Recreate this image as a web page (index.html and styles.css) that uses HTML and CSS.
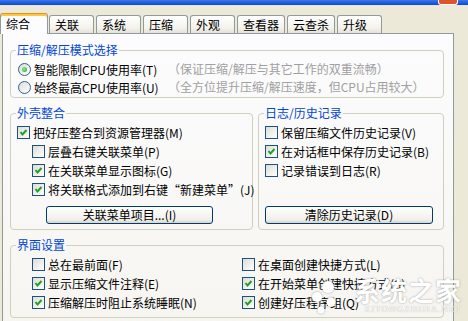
FILE: index.html
```html
<!DOCTYPE html>
<html lang="zh-CN">
<head>
    <meta charset="UTF-8">
    <meta name="viewport" content="width=device-width, initial-scale=1.0">
    <title>好压 设置</title>
    <link rel="stylesheet" href="styles.css">
</head>
<body>
    <div class="window">
        <div class="titlebar"><span class="close"></span></div>
        <div class="dialog">
            <ul class="tabs">
                <li class="active">综合</li>
                <li>关联</li>
                <li>系统</li>
                <li>压缩</li>
                <li>外观</li>
                <li>查看器</li>
                <li>云查杀</li>
                <li>升级</li>
            </ul>
            <div class="panel">
                <fieldset class="group">
                    <legend>压缩/解压模式选择</legend>
                    <div class="body mode">
                        <label class="opt"><span class="radio on"></span>智能限制CPU使用率(T)</label>
                        <span class="hint">（保证压缩/解压与其它工作的双重流畅）</span>
                        <label class="opt"><span class="radio"></span>始终最高CPU使用率(U)</label>
                        <span class="hint">（全方位提升压缩/解压速度，但CPU占用较大）</span>
                    </div>
                </fieldset>

                <div class="pair">
                    <fieldset class="group shell">
                        <legend>外壳整合</legend>
                        <div class="body">
                            <label class="opt"><span class="box on"><svg width="11" height="11" viewBox="0 0 11 11"><polyline points="2.5,5 4.5,7.5 8.5,3" /></svg></span>把好压整合到资源管理器(M)</label>
                            <label class="opt sub"><span class="box"></span>层叠右键关联菜单(P)</label>
                            <label class="opt sub"><span class="box on"><svg width="11" height="11" viewBox="0 0 11 11"><polyline points="2.5,5 4.5,7.5 8.5,3" /></svg></span>在关联菜单显示图标(G)</label>
                            <label class="opt sub"><span class="box on"><svg width="11" height="11" viewBox="0 0 11 11"><polyline points="2.5,5 4.5,7.5 8.5,3" /></svg></span>将关联格式添加到右键“新建菜单”(J)</label>
                            <button class="btn shell-btn">关联菜单项目...(I)</button>
                        </div>
                    </fieldset>
                    <fieldset class="group log">
                        <legend>日志/历史记录</legend>
                        <div class="body">
                            <label class="opt"><span class="box"></span>保留压缩文件历史记录(V)</label>
                            <label class="opt"><span class="box on"><svg width="11" height="11" viewBox="0 0 11 11"><polyline points="2.5,5 4.5,7.5 8.5,3" /></svg></span>在对话框中保存历史记录(B)</label>
                            <label class="opt"><span class="box"></span>记录错误到日志(R)</label>
                            <button class="btn log-btn">清除历史记录(D)</button>
                        </div>
                    </fieldset>
                </div>

                <fieldset class="group">
                    <legend>界面设置</legend>
                    <div class="body ui">
                        <label class="opt"><span class="box"></span>总在最前面(F)</label>
                        <label class="opt"><span class="box"></span>在桌面创建快捷方式(L)</label>
                        <label class="opt"><span class="box on"><svg width="11" height="11" viewBox="0 0 11 11"><polyline points="2.5,5 4.5,7.5 8.5,3" /></svg></span>显示压缩文件注释(E)</label>
                        <label class="opt"><span class="box on"><svg width="11" height="11" viewBox="0 0 11 11"><polyline points="2.5,5 4.5,7.5 8.5,3" /></svg></span>在开始菜单创建快捷方式(S)</label>
                        <label class="opt"><span class="box on"><svg width="11" height="11" viewBox="0 0 11 11"><polyline points="2.5,5 4.5,7.5 8.5,3" /></svg></span>压缩解压时阻止系统睡眠(N)</label>
                        <label class="opt"><span class="box on"><svg width="11" height="11" viewBox="0 0 11 11"><polyline points="2.5,5 4.5,7.5 8.5,3" /></svg></span>创建好压程序组(Q)</label>
                    </div>
                </fieldset>
            </div>
        </div>

        <!-- site watermark over the bottom right corner -->
        <div class="watermark">
            <svg class="mark-logo" width="46" height="40" viewBox="0 0 46 40">
                <circle cx="28" cy="12" r="6" />
                <circle cx="17" cy="22" r="5" />
                <circle cx="31" cy="27" r="4.5" />
                <circle cx="21" cy="35" r="3.5" />
            </svg>
            <div class="mark-text">
                <span class="mark-name">系统之家</span>
                <span class="mark-url">XITONGZHIJIA.NET</span>
            </div>
        </div>
    </div>
</body>
</html>
```

FILE: styles.css
```css
* {
    box-sizing: border-box;
}

body {
    margin: 0;
    background-color: #ece9d8;
    font-family: "Noto Sans CJK SC", "Liberation Sans", sans-serif;
    font-size: 12px;
    color: #000;
}

.window {
    position: relative;
    width: 468px;
    height: 321px;
    overflow: hidden;
}

.titlebar {
    display: flex;
    justify-content: flex-end;
    height: 5px;
    padding-right: 10px;
    background: linear-gradient(#3a78ec, #0b47cf);
}

.titlebar .close {
    width: 20px;
    height: 5px;
    border: 1px solid #fff;
    border-top: none;
    border-radius: 0 0 3px 3px;
    background-color: #e0532a;
}

.dialog {
    padding: 8px 14px 0 2px;
}

.tabs {
    display: flex;
    align-items: flex-end;
    gap: 2px;
    height: 20px;
    margin: 0;
    padding: 0;
    list-style: none;
}

.tabs > li {
    min-width: 45px;
    height: 18px;
    padding: 0 5px;
    border: 1px solid #919b9c;
    border-bottom: none;
    border-radius: 3px 3px 0 0;
    background: linear-gradient(#fff, #f3f2ec 70%, #e4e2d8);
    line-height: 17px;
    white-space: nowrap;
}

.tabs > li.active {
    position: relative;
    z-index: 1;
    min-width: 48px;
    height: 21px;
    margin: 0 -1px -1px -2px;
    border-top: 1px solid #e68b2c;
    background: #fcfcfe;
    box-shadow: inset 0 2px 0 #ffc73c;
    line-height: 19px;
}

.panel {
    height: 300px;
    padding: 9px 9px 0 7px;
    border: 1px solid #919b9c;
    background: linear-gradient(#fcfcfe, #f6f5f0);
}

.group {
    min-width: 0;
    margin: 0;
    padding: 0;
    border: 1px solid #d0d0bf;
    border-radius: 4px;
}

.group legend {
    margin-left: 5px;
    padding: 0 1px;
    color: #0046d5;
    line-height: 14px;
}

.group + .pair,
.pair + .group {
    margin-top: 8px;
}

.pair {
    display: flex;
    gap: 5px;
}

.shell {
    width: 243px;
}

.log {
    flex: 1;
}

.body {
    padding: 3px 0 5px 6px;
}

.mode {
    display: grid;
    grid-template-columns: 150px 1fr;
    padding: 3px 0 1px 7px;
}

.mode .opt {
    height: 18px;
}

.hint {
    color: #a0a0a0;
    line-height: 18px;
    white-space: nowrap;
}

.ui {
    display: grid;
    grid-template-columns: 210px 1fr;
    padding-left: 21px;
}

.opt {
    display: flex;
    align-items: center;
    gap: 3px;
    height: 19px;
    white-space: nowrap;
}

.opt.sub {
    margin-left: 15px;
}

.box,
.radio {
    flex: none;
    display: flex;
    align-items: center;
    justify-content: center;
    width: 13px;
    height: 13px;
    border: 1px solid #1c5180;
    background: linear-gradient(135deg, #dcdcd7, #fff);
}

.box svg polyline {
    fill: none;
    stroke: #21a121;
    stroke-width: 2;
}

.radio {
    border-color: #2f5f8f;
    border-radius: 50%;
}

.radio.on::after {
    content: '';
    width: 5px;
    height: 5px;
    border-radius: 50%;
    background: radial-gradient(circle at 40% 40%, #8ef08e, #21a121);
}

.btn {
    display: block;
    height: 18px;
    padding: 0;
    border: 1px solid #003c74;
    border-radius: 3px;
    background: linear-gradient(#fff, #f0efea 80%, #d8d3c8);
    font-family: inherit;
    font-size: 12px;
    line-height: 16px;
    color: #000;
}

.shell-btn {
    width: 167px;
    margin: 7px 0 0 29px;
}

.log-btn {
    width: 168px;
    margin-top: 26px;
}

.watermark {
    position: absolute;
    right: 6px;
    bottom: 6px;
    display: flex;
    align-items: center;
    gap: 8px;
    color: #fff;
}

.mark-logo {
    filter: drop-shadow(0 0 1px rgba(90, 90, 90, 0.5));
}

.mark-logo circle {
    fill: #fff;
}

.mark-text {
    display: flex;
    flex-direction: column;
    align-items: flex-end;
}

.mark-name {
    font-size: 26px;
    font-weight: bold;
    line-height: 28px;
    letter-spacing: 1px;
    text-shadow: 0 0 2px rgba(90, 90, 90, 0.6);
}

.mark-url {
    font-family: "Liberation Serif", serif;
    font-size: 9px;
    line-height: 11px;
    letter-spacing: 1px;
    text-shadow: 0 0 1px rgba(90, 90, 90, 0.6);
}
```
